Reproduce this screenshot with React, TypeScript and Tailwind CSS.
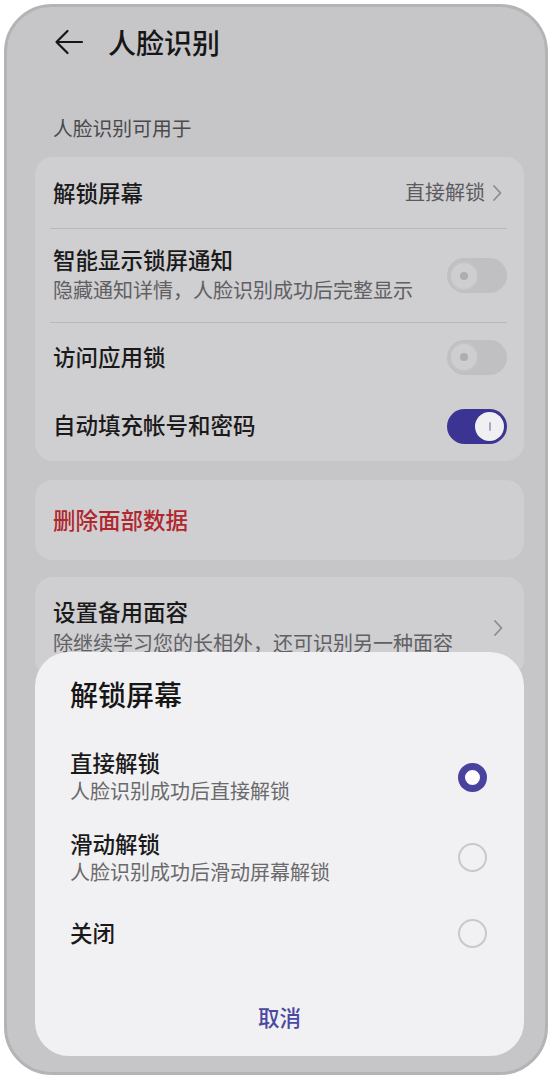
import React from "react";

function Toggle({ on }: { on: boolean }) {
  if (on) {
    return (
      <div className="w-[60px] h-[35px] rounded-full bg-[#3b3492] flex items-center justify-end pr-[3px] shrink-0">
        <div className="w-[29px] h-[29px] rounded-full bg-[#f0eff2] flex items-center justify-center">
          <div className="w-[2px] h-[9px] rounded-full bg-[#aaa7c8]" />
        </div>
      </div>
    );
  }
  return (
    <div className="w-[60px] h-[35px] rounded-full bg-[#c0bfc2] flex items-center pl-[2px] shrink-0">
      <div className="w-[30px] h-[30px] rounded-full bg-[#cecdd0] border-[2px] border-[#c3c2c5] flex items-center justify-center">
        <div className="w-[8px] h-[8px] rounded-full bg-[#aeadb0]" />
      </div>
    </div>
  );
}

function Chevron() {
  return (
    <svg width="12" height="18" viewBox="0 0 12 18" className="shrink-0">
      <path d="M3 2 L9.5 9 L3 16" fill="none" stroke="#8c8b8e" strokeWidth="1.8" strokeLinecap="round" strokeLinejoin="round" />
    </svg>
  );
}

function Radio({ on }: { on: boolean }) {
  if (on) {
    return <div className="w-[29px] h-[29px] rounded-full border-[7px] border-[#4a429f] bg-white shrink-0" />;
  }
  return <div className="w-[29px] h-[29px] rounded-full border-[2px] border-[#c9c8cb] shrink-0" />;
}

export default function App() {
  return (
    <div className="w-[550px] h-[1078px] bg-white pl-[4px] pr-[2px] pt-[4px] pb-[3px] font-['Noto_Sans_CJK_SC','Noto_Sans',sans-serif]">
      <div className="relative h-full rounded-[48px] border-[3px] border-[#b4b4b6] bg-[#c6c5c8] overflow-hidden">
        {/* header */}
        <div className="h-[72px] flex items-center pl-[47px] pb-[2px]">
          <svg width="30" height="26" viewBox="0 0 30 26" className="shrink-0">
            <path d="M28 13 H2.5 M13.5 2 L2.5 13 L13.5 24" fill="none" stroke="#161616" strokeWidth="2.2" strokeLinecap="round" strokeLinejoin="round" />
          </svg>
          <div className="ml-[24px] text-[28px] leading-[36px] font-medium text-[#161616]">人脸识别</div>
        </div>

        <div className="mt-[36px] pl-[46px] text-[19.8px] leading-[26px] text-[#4a4a4c]">人脸识别可用于</div>

        {/* card 1 */}
        <div className="mt-[16px] ml-[28px] mr-[21px] rounded-[18px] bg-[#cfced1] pl-[18px] pr-[17px]">
          <div className="h-[71px] flex items-center">
            <div className="flex-1 text-[22.5px] leading-[30px] font-medium text-[#1a1a1a] pb-[2px]">解锁屏幕</div>
            <div className="text-[20px] leading-[28px] text-[#5b5b5e] pb-[2px]">直接解锁</div>
            <div className="ml-[6px] mr-[4px]">
              <Chevron />
            </div>
          </div>
          <div className="h-px bg-[#b9b8bb] ml-[-3px]" />
          <div className="h-[93px] flex items-center">
            <div className="flex-1 pb-[4px]">
              <div className="text-[22.5px] leading-[30px] font-medium text-[#1a1a1a]">智能显示锁屏通知</div>
              <div className="mt-[3px] text-[20px] leading-[26px] text-[#606063]">隐藏通知详情，人脸识别成功后完整显示</div>
            </div>
            <Toggle on={false} />
          </div>
          <div className="h-px bg-[#b9b8bb] ml-[-3px]" />
          <div className="h-[68px] flex items-center">
            <div className="flex-1 text-[22.5px] leading-[30px] font-medium text-[#1a1a1a] pb-[2px]">访问应用锁</div>
            <Toggle on={false} />
          </div>
          <div className="h-[70px] flex items-center">
            <div className="flex-1 text-[22.5px] leading-[30px] font-medium text-[#1a1a1a] pb-[4px]">自动填充帐号和密码</div>
            <Toggle on={true} />
          </div>
        </div>

        {/* card 2 */}
        <div className="mt-[19px] ml-[28px] mr-[21px] h-[80px] rounded-[18px] bg-[#cfced1] pl-[18px] flex items-center">
          <div className="text-[22.5px] leading-[30px] font-medium text-[#b0272e] pb-[2px]">删除面部数据</div>
        </div>

        {/* card 3 */}
        <div className="mt-[17px] ml-[28px] mr-[21px] h-[100px] rounded-[18px] bg-[#cfced1] pl-[18px] pr-[20px] pt-[19px] flex">
          <div className="flex-1">
            <div className="text-[22.5px] leading-[30px] font-medium text-[#1a1a1a]">设置备用面容</div>
            <div className="mt-[2px] text-[20px] leading-[30px] text-[#606063]">除继续学习您的长相外，还可识别另一种面容</div>
          </div>
          <div className="mt-[23px]">
            <Chevron />
          </div>
        </div>

        {/* bottom sheet */}
        <div className="absolute left-[28px] right-[21px] bottom-[16px] h-[404px] rounded-[34px] bg-[#f1f0f2] pl-[35px] pr-[37px]">
          <div className="h-[85px] pt-[26px]">
            <div className="text-[28px] leading-[32px] font-medium text-[#161616]">解锁屏幕</div>
          </div>
          <div className="h-[80px] flex items-center">
            <div className="flex-1 pb-[2px]">
              <div className="text-[22.5px] leading-[30px] font-medium text-[#1a1a1a]">直接解锁</div>
              <div className="text-[20px] leading-[28px] text-[#6a6a6d]">人脸识别成功后直接解锁</div>
            </div>
            <Radio on={true} />
          </div>
          <div className="h-[80px] flex items-center">
            <div className="flex-1">
              <div className="text-[22.5px] leading-[30px] font-medium text-[#1a1a1a]">滑动解锁</div>
              <div className="text-[20px] leading-[28px] text-[#6a6a6d]">人脸识别成功后滑动屏幕解锁</div>
            </div>
            <Radio on={false} />
          </div>
          <div className="h-[72px] flex items-center">
            <div className="flex-1 text-[22.5px] leading-[30px] font-medium text-[#1a1a1a] pb-[3px]">关闭</div>
            <Radio on={false} />
          </div>
          <div className="mt-[30px] ml-[-35px] mr-[-37px] text-center text-[21.5px] leading-[36px] font-medium text-[#4b48a2]">取消</div>
        </div>
      </div>
    </div>
  );
}
